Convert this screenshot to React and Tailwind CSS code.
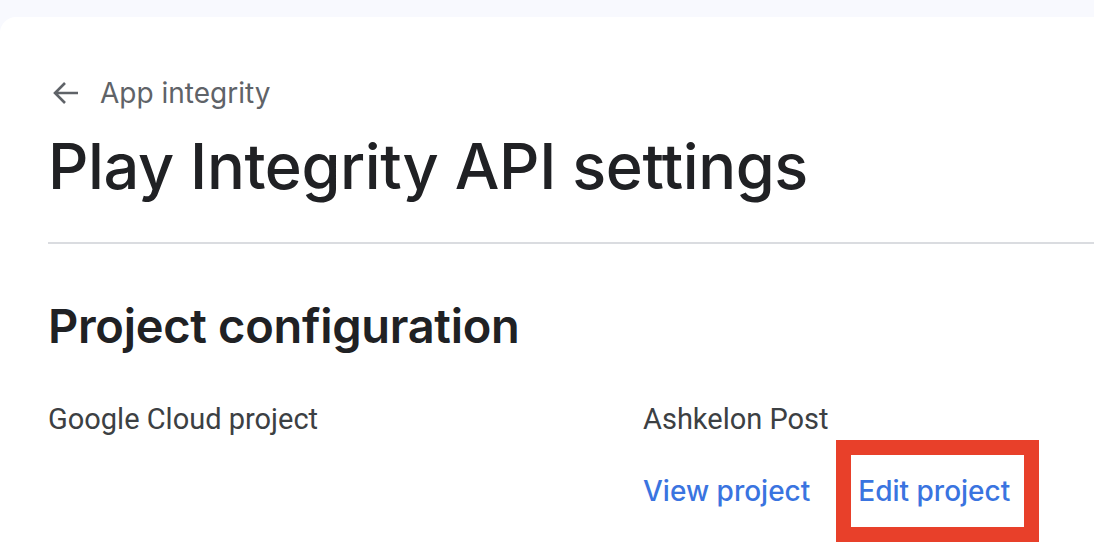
import React from 'react';

const gsans = { fontFamily: 'Inter, "Open Sans", sans-serif' };

export default function App() {
  return (
    <div className="w-[1094px] h-[554px] overflow-hidden bg-[#f8f9fe] pt-[17px]">
      <div className="h-full bg-white rounded-tl-[16px] pl-[48px]">
        <div className="pt-[62px] flex items-center text-[#5f6368]">
          <svg width="28" height="28" viewBox="0 0 28 28" className="ml-[4px]" fill="none" stroke="currentColor" strokeWidth="2.6">
            <path d="M26 14H3M13 4L3 14l10 10" />
          </svg>
          <span className="ml-[20px] text-[28px] leading-none" style={gsans}>App integrity</span>
        </div>
        <h1 className="mt-[28px] text-[63px] leading-none text-[#202124] font-medium tracking-[-0.4px]" style={gsans}>
          Play Integrity API settings
        </h1>
        <div className="mt-[44px] h-[2px] bg-[#dadce0]" />
        <h2 className="mt-[58px] text-[47px] leading-none text-[#202124] font-semibold tracking-[-0.3px]" style={gsans}>
          Project configuration
        </h2>
        <div className="mt-[56px] flex text-[#3c4043]" style={{ fontFamily: 'Roboto, sans-serif' }}>
          <div className="w-[595px] text-[29px] leading-none">Google Cloud project</div>
          <div className="flex flex-col">
            <div className="text-[29px] leading-none">Ashkelon Post</div>
            <div className="mt-[6px] flex items-center text-[#3a74e0] text-[28px] font-medium" style={gsans}>
              <a className="mr-[26px]">View project</a>
              <span className="border-[15px] border-[#e8402a] pl-[7px] pr-[14px] h-[102px] flex items-center">
                <a>Edit project</a>
              </span>
            </div>
          </div>
        </div>
      </div>
    </div>
  );
}
